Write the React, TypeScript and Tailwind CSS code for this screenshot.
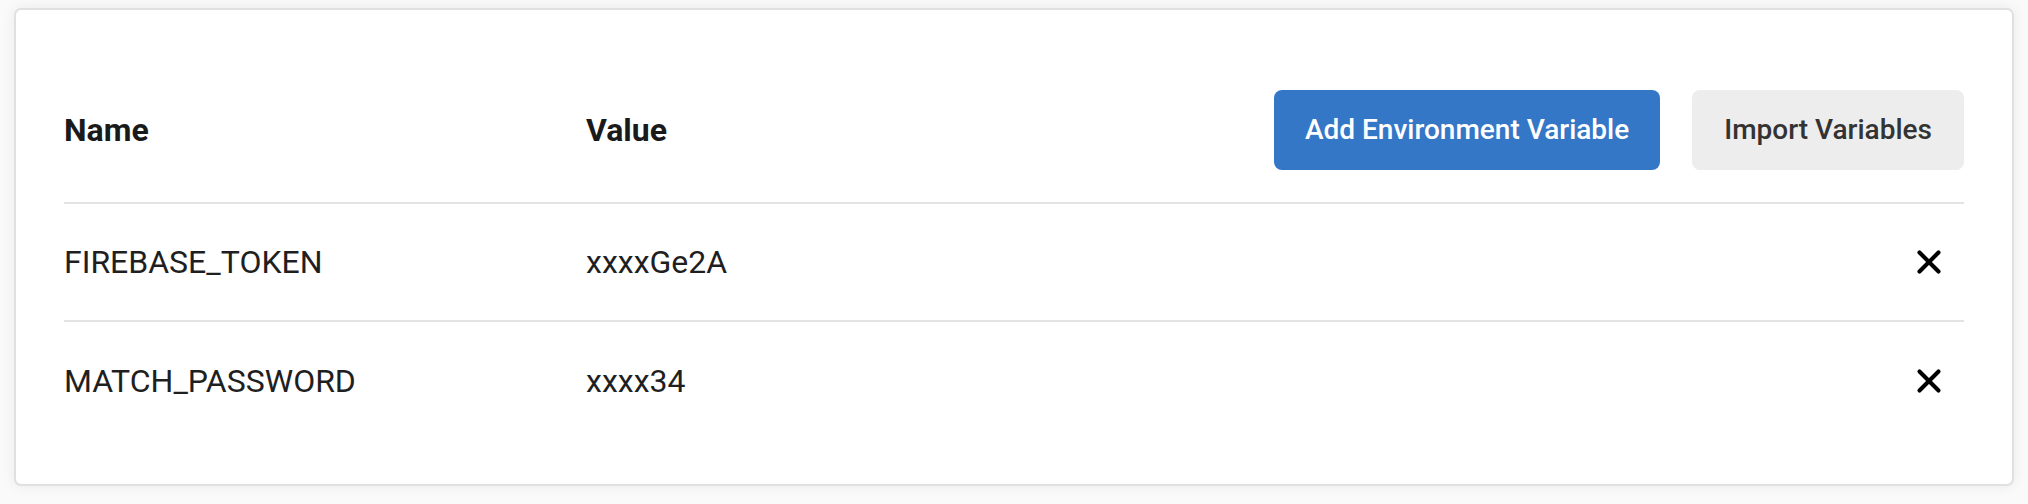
import { X } from "lucide-react";

const variables = [
  { name: "FIREBASE_TOKEN", value: "xxxxGe2A" },
  { name: "MATCH_PASSWORD", value: "xxxx34" },
];

export default function App() {
  return (
    <div
      className="min-h-screen w-full bg-[#fafafa] px-[14px] pt-[8px]"
      style={{ fontFamily: "Roboto, 'Liberation Sans', sans-serif" }}
    >
      <div className="w-full rounded-[7px] border-2 border-[#e0e0e0] bg-white px-12 pt-20 pb-[44px] shadow-[0_0_14px_rgba(0,0,0,0.07)]">
        {/* Header */}
        <div className="flex items-center border-b-2 border-[#e3e3e3] pb-8">
          <div className="w-[522px] text-[32px] font-bold text-[#1a1a1a]">Name</div>
          <div className="flex-1 text-[32px] font-bold text-[#1a1a1a]">Value</div>
          <div className="flex items-center gap-8">
            <button className="h-20 rounded-lg bg-[#3477c7] px-[31px] text-[28px] font-medium text-white">
              Add Environment Variable
            </button>
            <button className="h-20 rounded-lg bg-[#ededed] px-[32px] text-[28px] font-medium text-[#333333]">
              Import Variables
            </button>
          </div>
        </div>

        {/* Rows */}
        {variables.map((v, i) => (
          <div
            key={v.name}
            className={
              i < variables.length - 1
                ? "flex h-[118px] items-center border-b-2 border-[#e3e3e3]"
                : "flex h-[118px] items-center"
            }
          >
            <div className="w-[522px] text-[32px] text-[#1f1f1f]">{v.name}</div>
            <div className="flex-1 text-[32px] text-[#1f1f1f]">{v.value}</div>
            <button className="mr-[15px] flex h-10 w-10 items-center justify-center text-black">
              <X size={38} strokeWidth={2.6} />
            </button>
          </div>
        ))}
      </div>
    </div>
  );
}
